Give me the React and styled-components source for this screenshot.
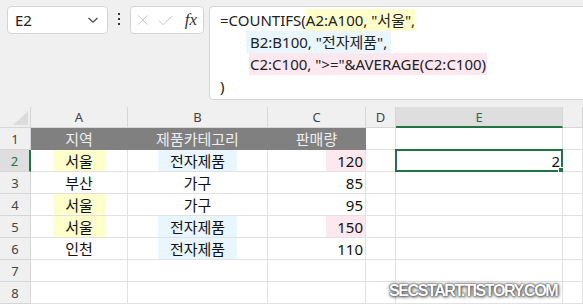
import React from "react";
import styled, { createGlobalStyle } from "styled-components";

const GlobalStyle = createGlobalStyle`
  html, body {
    margin: 0;
    padding: 0;
    overflow: hidden;
    background: #f0f0f0;
  }
  body {
    font-family: "Noto Sans", "Noto Sans CJK KR", sans-serif;
    width: 583px;
    height: 304px;
  }
`;

const Page = styled.div`
  position: relative;
  width: 583px;
  height: 304px;
  overflow: hidden;
`;

const Toolbar = styled.div`
  display: flex;
  align-items: flex-start;
  height: 107px;
  box-sizing: border-box;
  padding: 6px 0 0 7px;
  background: #f0f0f0;
`;

const NameBox = styled.div`
  display: flex;
  align-items: center;
  justify-content: space-between;
  width: 101px;
  height: 28px;
  box-sizing: border-box;
  padding: 0 8px 0 7px;
  background: #fff;
  border: 1px solid #d4d4d4;
  border-radius: 4px;
  font-size: 15px;
  color: #222;
`;

const Dots = styled.div`
  display: flex;
  flex-direction: column;
  gap: 3px;
  width: 22px;
  align-items: center;
  padding-top: 7px;

  span {
    width: 2px;
    height: 2px;
    background: #333;
  }
`;

const FxBox = styled.div`
  display: flex;
  align-items: center;
  gap: 9px;
  width: 74px;
  height: 28px;
  box-sizing: border-box;
  padding: 0 6px 0 6px;
  background: #fff;
  border: 1px solid #d4d4d4;
  border-radius: 4px;
`;

const Fx = styled.span`
  font-family: "Liberation Serif", serif;
  font-style: italic;
  font-size: 17px;
  color: #333;
  margin-left: 3px;
`;

const FormulaBox = styled.div`
  flex: 1;
  margin-left: 5px;
  margin-right: -6px;
  height: 94px;
  box-sizing: border-box;
  padding: 2px 0 0 10px;
  background: #fff;
  border: 1px solid #d4d4d4;
  border-radius: 4px;
  font-size: 15px;
  line-height: 22px;
  color: #222;
  white-space: pre;
`;

const Line = styled.div`
  height: 22px;
  padding-left: ${(p) => p.$indent || 0}px;
`;

const Mark = styled.span`
  display: inline-block;
  background: ${(p) => p.$bg};
  padding: 0 ${(p) => p.$pad || 0}px;
`;

const Grid = styled.div`
  display: grid;
  grid-template-columns: 31px 97px 140px 98px 30px 167px 1fr;
  grid-template-rows: 21px repeat(8, 22px);
  background: #fff;
`;

const ColHead = styled.div`
  display: flex;
  align-items: center;
  justify-content: center;
  box-sizing: border-box;
  background: ${(p) => (p.$active ? "#dedede" : "#f0f0f0")};
  border-right: 1px solid #d6d6d6;
  border-bottom: ${(p) => (p.$active ? "2px solid #217346" : "1px solid #d6d6d6")};
  font-size: 13px;
  color: ${(p) => (p.$active ? "#217346" : "#444")};
`;

const Corner = styled.div`
  background: #f0f0f0;
  border-right: 1px solid #d6d6d6;
  border-bottom: 1px solid #d6d6d6;
  box-sizing: border-box;
  display: flex;
  align-items: flex-end;
  justify-content: flex-end;
  padding: 0 2px 2px 0;
`;

const RowHead = styled.div`
  display: flex;
  align-items: center;
  justify-content: center;
  box-sizing: border-box;
  background: ${(p) => (p.$active ? "#dedede" : "#f0f0f0")};
  border-bottom: 1px solid #d6d6d6;
  border-right: ${(p) => (p.$active ? "2px solid #217346" : "1px solid #d6d6d6")};
  font-size: 13px;
  color: ${(p) => (p.$active ? "#217346" : "#444")};
`;

const Cell = styled.div`
  position: relative;
  display: flex;
  align-items: stretch;
  justify-content: ${(p) => (p.$right ? "flex-end" : "center")};
  box-sizing: border-box;
  background: ${(p) => (p.$dark ? "#808080" : "#fff")};
  border-right: 1px solid ${(p) => (p.$dark ? "#808080" : "#e1e1e1")};
  border-bottom: 1px solid ${(p) => (p.$dark ? "#808080" : "#e1e1e1")};
  font-size: 15px;
  color: ${(p) => (p.$dark ? "#eeeeee" : "#111")};
`;

const CellText = styled.span`
  display: flex;
  align-items: center;
  background: ${(p) => p.$bg || "transparent"};
  padding: ${(p) => (p.$right ? "0 2px 0 11px" : "0 12px")};
`;

const Selection = styled.div`
  position: absolute;
  left: -1px;
  top: -1px;
  right: -1px;
  bottom: -1px;
  border: 2px solid #217346;
  pointer-events: none;
`;

const Handle = styled.div`
  position: absolute;
  right: -4px;
  bottom: -4px;
  width: 5px;
  height: 5px;
  background: #217346;
  border: 1px solid #fff;
`;

const Watermark = styled.div`
  position: absolute;
  left: 389px;
  top: 282px;
  font-family: "Liberation Sans", Arial, sans-serif;
  font-weight: 700;
  font-size: 16px;
  letter-spacing: -1.4px;
  color: #fff;
  text-shadow: 0 0 1px #444, 0 0 2px #555, 1px 1px 3px #666, 0 0 4px #888;
`;

const YEL = "#ffffcc";
const BLU = "#eaf6fd";
const PNK = "#fde8f0";

const rows = [
  { r: 1, a: "지역", b: "제품카테고리", c: "판매량", dark: true },
  { r: 2, a: "서울", b: "전자제품", c: "120", ya: true, bb: true, pc: true },
  { r: 3, a: "부산", b: "가구", c: "85" },
  { r: 4, a: "서울", b: "가구", c: "95", ya: true },
  { r: 5, a: "서울", b: "전자제품", c: "150", ya: true, bb: true, pc: true },
  { r: 6, a: "인천", b: "전자제품", c: "110", bb: true },
  { r: 7 },
  { r: 8 },
];

function Chevron() {
  return (
    <svg width="12" height="8" viewBox="0 0 12 8">
      <path d="M1.5 2 L6 6.2 L10.5 2" fill="none" stroke="#444" strokeWidth="1.2" />
    </svg>
  );
}

function Cross() {
  return (
    <svg width="14" height="14" viewBox="0 0 14 14">
      <path d="M1.5 1.5 L12.5 12.5 M12.5 1.5 L1.5 12.5" stroke="#c4c4c4" strokeWidth="1.1" />
    </svg>
  );
}

function Check() {
  return (
    <svg width="18" height="13" viewBox="0 0 18 13">
      <path d="M1 6.5 L6 11.5 L17 1" fill="none" stroke="#c4c4c4" strokeWidth="1.1" />
    </svg>
  );
}

export default function App() {
  return (
    <Page>
      <GlobalStyle />
      <Toolbar>
        <NameBox>
          <span>E2</span>
          <Chevron />
        </NameBox>
        <Dots>
          <span />
          <span />
          <span />
        </Dots>
        <FxBox>
          <Cross />
          <Check />
          <Fx>fx</Fx>
        </FxBox>
        <FormulaBox>
          <Line>
            =COUNTIFS(<Mark $bg={YEL}>A2:A100, "서울",</Mark>
          </Line>
          <Line $indent={26}>
            <Mark $bg={BLU} $pad={4}>B2:B100, "전자제품",</Mark>
          </Line>
          <Line $indent={29}>
            <Mark $bg={PNK} $pad={1}>C2:C100, "&gt;="&amp;AVERAGE(C2:C100)</Mark>
          </Line>
          <Line>)</Line>
        </FormulaBox>
      </Toolbar>
      <Grid>
        <Corner>
          <svg width="15" height="14" viewBox="0 0 15 14">
            <path d="M15 0 L15 14 L0 14 Z" fill="#dcdcdc" />
          </svg>
        </Corner>
        {["A", "B", "C", "D", "E", "F"].map((c) => (
          <ColHead key={c} $active={c === "E"}>
            {c === "F" ? "" : c}
          </ColHead>
        ))}
        {rows.map((row) => (
          <React.Fragment key={row.r}>
            <RowHead $active={row.r === 2}>{row.r}</RowHead>
            <Cell $dark={row.dark}>
              {row.a && <CellText $bg={row.ya ? YEL : null}>{row.a}</CellText>}
            </Cell>
            <Cell $dark={row.dark}>
              {row.b && <CellText $bg={row.bb ? BLU : null}>{row.b}</CellText>}
            </Cell>
            <Cell $dark={row.dark} $right={!row.dark}>
              {row.c && (
                <CellText $right={!row.dark} $bg={row.pc ? PNK : null}>
                  {row.c}
                </CellText>
              )}
            </Cell>
            <Cell />
            <Cell $right>
              {row.r === 2 && (
                <>
                  <CellText $right>2</CellText>
                  <Selection>
                    <Handle />
                  </Selection>
                </>
              )}
            </Cell>
            <Cell />
          </React.Fragment>
        ))}
      </Grid>
      <Watermark>SECSTART.TISTORY.COM</Watermark>
    </Page>
  );
}
